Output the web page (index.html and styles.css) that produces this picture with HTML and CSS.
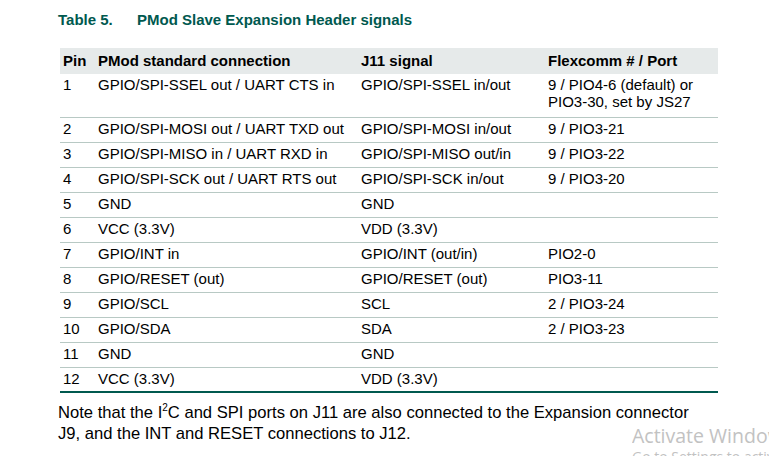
FILE: index.html
```html
<!DOCTYPE html>
<html>
<head>
<meta charset="utf-8">
<link rel="stylesheet" href="styles.css">
</head>
<body>
<div class="page">
  <h2 class="caption"><span class="num">Table 5.</span><span class="ttl">PMod Slave Expansion Header signals</span></h2>
  <table class="sig">
    <thead>
      <tr><th class="c1">Pin</th><th class="c2">PMod standard connection</th><th class="c3">J11 signal</th><th class="c4">Flexcomm # / Port</th></tr>
    </thead>
    <tbody>
      <tr class="tall"><td>1</td><td>GPIO/SPI-SSEL out / UART CTS in</td><td>GPIO/SPI-SSEL in/out</td><td>9 / PIO4-6 (default) or<br>PIO3-30, set by JS27</td></tr>
      <tr><td>2</td><td>GPIO/SPI-MOSI out / UART TXD out</td><td>GPIO/SPI-MOSI in/out</td><td>9 / PIO3-21</td></tr>
      <tr><td>3</td><td>GPIO/SPI-MISO in / UART RXD in</td><td>GPIO/SPI-MISO out/in</td><td>9 / PIO3-22</td></tr>
      <tr><td>4</td><td>GPIO/SPI-SCK out / UART RTS out</td><td>GPIO/SPI-SCK in/out</td><td>9 / PIO3-20</td></tr>
      <tr><td>5</td><td>GND</td><td>GND</td><td></td></tr>
      <tr><td>6</td><td>VCC (3.3V)</td><td>VDD (3.3V)</td><td></td></tr>
      <tr><td>7</td><td>GPIO/INT in</td><td>GPIO/INT (out/in)</td><td>PIO2-0</td></tr>
      <tr><td>8</td><td>GPIO/RESET (out)</td><td>GPIO/RESET (out)</td><td>PIO3-11</td></tr>
      <tr><td>9</td><td>GPIO/SCL</td><td>SCL</td><td>2 / PIO3-24</td></tr>
      <tr><td>10</td><td>GPIO/SDA</td><td>SDA</td><td>2 / PIO3-23</td></tr>
      <tr><td>11</td><td>GND</td><td>GND</td><td></td></tr>
      <tr class="last"><td>12</td><td>VCC (3.3V)</td><td>VDD (3.3V)</td><td></td></tr>
    </tbody>
  </table>
  <p class="note">Note that the I<sup>2</sup>C and SPI ports on J11 are also connected to the Expansion connector J9, and the INT and RESET connections to J12.</p>
</div>
<div class="watermark">
  <div class="wm1">Activate Windows</div>
  <div class="wm2">Go to Settings to activate Windows.</div>
</div>
</body>
</html>
```
FILE: styles.css
```css
html, body {
  margin: 0;
  padding: 0;
  background: #ffffff;
  overflow: hidden;
}
body {
  width: 769px;
  height: 456px;
  position: relative;
  font-family: "Liberation Sans", Arial, sans-serif;
  color: #000;
}
.page {
  padding: 11px 0 0 58px;
}
.caption {
  margin: 0;
  font-size: 15px;
  font-weight: bold;
  color: #00594f;
  line-height: 18px;
  display: flex;
}
.caption .num {
  width: 79px;
}
.sig {
  margin: 19px 0 0 2px;
  border-collapse: collapse;
  width: 658px;
  font-size: 15px;
  table-layout: fixed;
}
.sig th, .sig td {
  text-align: left;
  vertical-align: top;
  padding: 0 0 0 3px;
  white-space: nowrap;
}
.sig th {
  background: #e6eaea;
  height: 26px;
  line-height: 25px;
  font-weight: bold;
}
.c1 { width: 32px; }
.c2 { width: 260px; }
.c3 { width: 184px; }
.sig td {
  line-height: 17px;
  height: 25px;
  padding-top: 2px;
  box-sizing: border-box;
  border-bottom: 1px solid #b8c9c4;
}
.sig tr.tall td {
  height: 43px;
}
.sig tr.last td {
  border-bottom: 2px solid #00594f;
}
.note {
  margin: 9px 0 0 0;
  font-size: 16.6px;
  line-height: 21px;
  width: 645px;
}
.note sup {
  font-size: 10px;
  line-height: 0;
  vertical-align: 7px;
}
.watermark {
  position: absolute;
  left: 632px;
  top: 424px;
  width: 137px;
  height: 32px;
  overflow: hidden;
  color: #c2c2c2;
  font-family: "Open Sans", "Noto Sans", sans-serif;
  white-space: nowrap;
}
.wm1 {
  font-size: 19.5px;
  line-height: 24px;
}
.wm2 {
  font-size: 14px;
  line-height: 18px;
}
```
